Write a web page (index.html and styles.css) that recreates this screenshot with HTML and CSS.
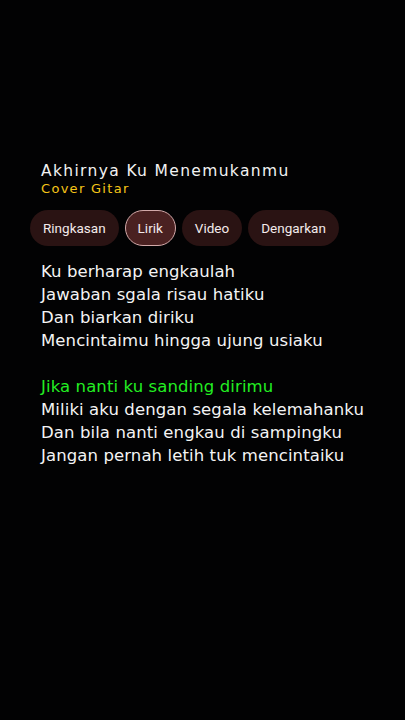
FILE: index.html
```html
<!DOCTYPE html>
<html>
<head>
<meta charset="utf-8">
<link rel="stylesheet" href="styles.css">
</head>
<body>
<div class="page">
  <div class="header">
    <div class="title">Akhirnya Ku Menemukanmu</div>
    <div class="subtitle">Cover Gitar</div>
  </div>
  <div class="chips">
    <div class="chip">Ringkasan</div>
    <div class="chip active">Lirik</div>
    <div class="chip">Video</div>
    <div class="chip">Dengarkan</div>
  </div>
  <div class="lyrics">
    <div class="line">Ku berharap engkaulah</div>
    <div class="line">Jawaban sgala risau hatiku</div>
    <div class="line">Dan biarkan diriku</div>
    <div class="line">Mencintaimu hingga ujung usiaku</div>
    <div class="line blank">&nbsp;</div>
    <div class="line current">Jika nanti ku sanding dirimu</div>
    <div class="line">Miliki aku dengan segala kelemahanku</div>
    <div class="line">Dan bila nanti engkau di sampingku</div>
    <div class="line">Jangan pernah letih tuk mencintaiku</div>
  </div>
</div>
</body>
</html>
```
FILE: styles.css
```css
html, body {
  margin: 0;
  padding: 0;
  background: #020203;
}
.page {
  width: 405px;
  height: 720px;
  background: #020203;
  padding-top: 162px;
  box-sizing: border-box;
}
.header {
  padding-left: 41px;
}
.title {
  font-family: "DejaVu Sans", sans-serif;
  font-size: 15.5px;
  line-height: 19px;
  letter-spacing: 1.35px;
  color: #f2f2f2;
}
.subtitle {
  font-family: "DejaVu Sans", sans-serif;
  font-size: 13px;
  line-height: 15px;
  letter-spacing: 1.3px;
  color: #f5c518;
}
.chips {
  display: flex;
  gap: 6px;
  padding-left: 30px;
  margin-top: 14px;
}
.chip {
  height: 36px;
  box-sizing: border-box;
  padding: 0 13px;
  border-radius: 18px;
  background: #2a1313;
  color: #f3eaea;
  font-family: Roboto, sans-serif;
  font-size: 13.5px;
  display: flex;
  align-items: center;
}
.chip.active {
  background: #4a2121;
  border: 1px solid #d2a9a9;
  padding: 0 12px;
}
.lyrics {
  padding-left: 41px;
  margin-top: 14px;
}
.line {
  font-family: "DejaVu Sans", sans-serif;
  font-size: 16.5px;
  line-height: 23px;
  letter-spacing: 0.1px;
  color: #f4f4f4;
  white-space: nowrap;
}
.line.current {
  color: #22ee22;
}
```
